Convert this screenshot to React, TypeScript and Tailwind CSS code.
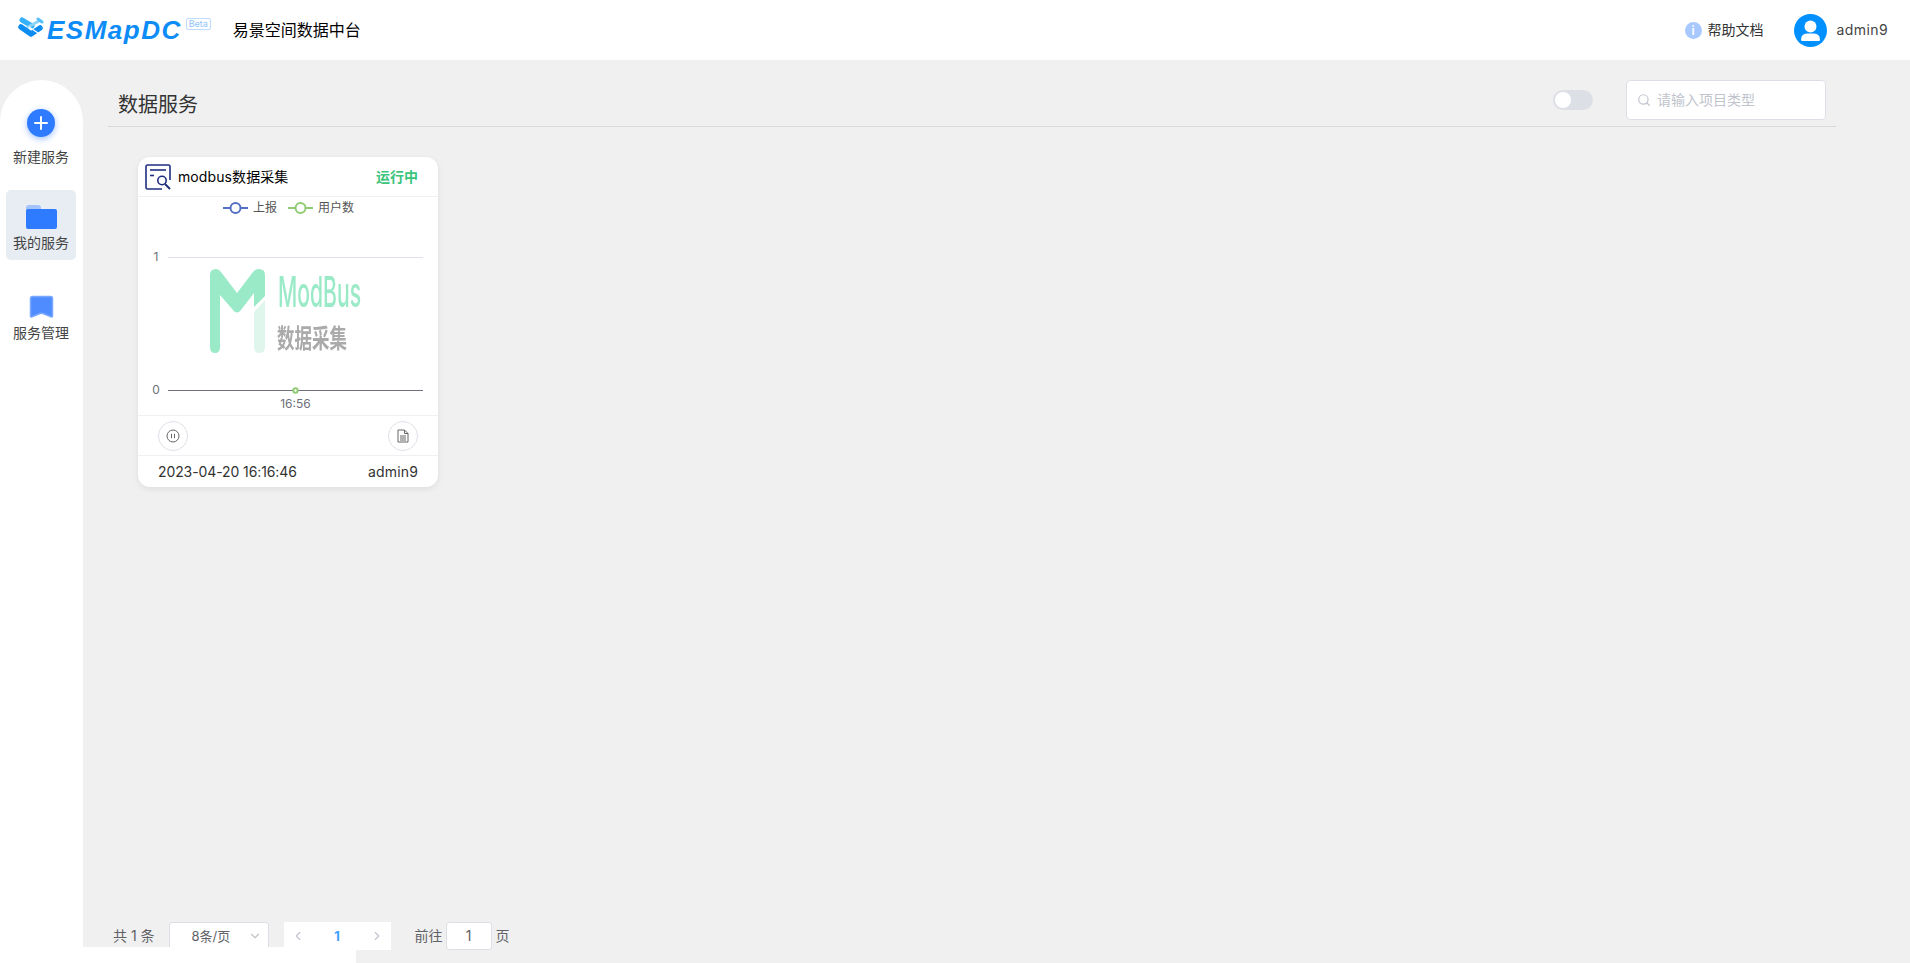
import React from 'react';
import { ChevronDown, ChevronLeft, ChevronRight, Search } from 'lucide-react';

const LogoMark = () => (
  <svg width="26" height="22" viewBox="0 0 26 22" fill="none" strokeLinecap="round" className="shrink-0 mb-[4px]">
    <path d="M4 3 L14 9" stroke="#35b0fb" strokeWidth="5" />
    <path d="M10 10 L21 4" stroke="#8ad4fc" strokeWidth="3" />
    <path d="M20 2 L24 5" stroke="#55c0fb" strokeWidth="3" />
    <path d="M3 10 L13 17 L22 11" stroke="#0c8df2" strokeWidth="5.5" strokeLinejoin="round" />
    <path d="M11 10 L20 16" stroke="#fff" strokeWidth="1.2" />
  </svg>
);

const CardIcon = () => (
  <svg width="26" height="26" viewBox="0 0 26 26" fill="none" stroke="#1f2f80" strokeWidth="1.6" className="shrink-0">
    <path d="M17 25 H2.5 Q1 25 1 23.5 V2.5 Q1 1 2.5 1 H23.5 Q25 1 25 2.5 V16" />
    <path d="M5 6 H21" />
    <path d="M5 11.5 H9" />
    <circle cx="17" cy="16.5" r="4.2" />
    <path d="M20 20 L25 25" strokeWidth="2" />
  </svg>
);

const LegendMark = ({ color }: { color: string }) => (
  <svg width="25" height="12" viewBox="0 0 25 12" fill="none" stroke={color} strokeWidth="2">
    <path d="M0 6 H7 M18 6 H25" />
    <circle cx="12.5" cy="6" r="5" fill="#fff" />
  </svg>
);

const Chart = () => (
  <svg width="300" height="196" viewBox="0 22 300 196" className="block">
    <text x="18" y="64" textAnchor="middle" fontSize="12" fill="#6e7079">1</text>
    <path d="M30 60.5 H285" stroke="#e0e2ec" />
    <g className="blur-[0.4px]">
      <path
        d="M72 78 Q72 72 78 72 Q81 72 83 75 L99 96 L115 75 Q117 72 121 72 Q127 72 127 78 L127 99 L116 110 V96 L103 113 Q99 118 95 113 L82 98 V150 Q82 156 77 156 Q72 156 72 150 Z"
        fill="#9aeac8"
      />
      <path d="M116 115 L127 103 V150 Q127 156 121 156 Q116 156 116 150 Z" fill="#def6ec" />
      <text x="140" y="110" fontSize="42" fontWeight="500" fill="#9aeac8" textLength="83" lengthAdjust="spacingAndGlyphs">ModBus</text>
      <text x="139" y="151" fontSize="26" fontWeight="700" fill="#aaaaaa" textLength="70" lengthAdjust="spacingAndGlyphs">数据采集</text>
    </g>
    <text x="18" y="197" textAnchor="middle" fontSize="12" fill="#6e7079">0</text>
    <path d="M30 193.5 H285" stroke="#6e7079" />
    <circle cx="157.5" cy="193.5" r="2.2" fill="#fff" stroke="#91cc75" strokeWidth="2" />
  </svg>
);

const NavItem = ({ icon, label, active }: { icon: React.ReactNode; label: string; active?: boolean }) => (
  <div className={`w-[70px] h-[70px] rounded-[5px] flex flex-col items-center ${active ? 'bg-[#e8ecf3]' : ''}`}>
    <div className="h-[44px] w-full flex items-end justify-center pb-[5px]">{icon}</div>
    <span className="text-sm leading-[18px] text-[#444] whitespace-nowrap">{label}</span>
  </div>
);

export default function App() {
  return (
    <div className="h-[963px] w-[1910px] overflow-hidden flex flex-col bg-[#f0f0f0] font-['Inter','Noto_Sans_CJK_SC',sans-serif]">
      {/* top bar */}
      <header className="h-[60px] bg-white flex items-center shrink-0 pl-[18px] pr-[22px]">
        <LogoMark />
        <span className="ml-[3px] text-[26px] leading-none font-bold italic text-[#0d8cf8] font-['Liberation_Sans',sans-serif] tracking-[1.5px]">ESMapDC</span>
        <span className="ml-[4px] mb-[12px] h-[12px] w-[25px] border border-[#bcdcff] rounded-[2px] text-[9px] leading-[10px] text-center text-[#8fc4fb]">Beta</span>
        <span className="ml-[22px] text-base text-black">易景空间数据中台</span>
        <div className="ml-auto flex items-center">
          <div className="w-[17px] h-[17px] rounded-full bg-[#a8c9ff] text-white text-xs leading-[17px] text-center font-semibold">i</div>
          <span className="ml-[6px] text-sm text-[#333]">帮助文档</span>
          <div className="ml-[30px] w-[33px] h-[33px] rounded-full bg-[#0090ff] overflow-hidden">
            <svg viewBox="0 0 33 33" width="33" height="33" fill="#fff">
              <circle cx="16.5" cy="12.5" r="6" />
              <path d="M7 26 Q7 19.5 13 19.5 H20 Q26 19.5 26 26 Q26 27 24.5 27 H8.5 Q7 27 7 26 Z" />
            </svg>
          </div>
          <span className="ml-[10px] text-sm text-[#444] tracking-[0.4px]">admin9</span>
        </div>
      </header>

      <div className="flex-1 flex min-h-0">
        {/* side nav */}
        <aside className="w-[83px] mt-[20px] pr-[1px] bg-white rounded-t-[42px] flex flex-col items-center shrink-0">
          <div className="pt-[29px] flex flex-col items-center">
            <div className="w-[28px] h-[28px] rounded-full bg-[#2f7bff] shadow-[0_2px_6px_rgba(47,123,255,0.45)] flex items-center justify-center">
              <svg width="14" height="14" viewBox="0 0 14 14" stroke="#fff" strokeWidth="2" strokeLinecap="round">
                <path d="M7 1 V13 M1 7 H13" />
              </svg>
            </div>
            <span className="mt-[11px] text-sm leading-[18px] text-[#444]">新建服务</span>
          </div>
          <div className="mt-[24px]">
            <NavItem
              active
              label="我的服务"
              icon={
                <svg width="31" height="24" viewBox="0 0 31 24">
                  <path d="M0 3 Q0 0 3 0 H12 Q15 0 15 3 V8 H0 Z" fill="#a5c3fb" />
                  <rect x="0" y="4" width="31" height="20" rx="2" fill="#2f7bff" />
                </svg>
              }
            />
          </div>
          <div className="mt-[20px]">
            <NavItem
              label="服务管理"
              icon={
                <svg width="25" height="24" viewBox="0 0 25 24">
                  <path d="M1.5 3.5 Q1.5 1.5 3.5 1.5 H21.5 Q23.5 1.5 23.5 3.5 V21 Q23.5 22.5 22 21.8 L14 18.5 Q12.5 18 11 18.5 L3 21.8 Q1.5 22.5 1.5 21 Z" fill="#4f8cff" stroke="#7aa7ff" strokeWidth="1.5" />
                </svg>
              }
            />
          </div>
        </aside>

        <main className="flex-1 flex flex-col relative min-w-0">
          <div className="ml-[25px] w-[1728px] h-[67px] pt-[13px] border-b border-[#d9d9dc] shrink-0 flex items-center">
            <h2 className="ml-[10px] mt-[10px] text-xl font-normal text-[#333]">数据服务</h2>
            <div className="ml-auto mr-[10px] flex items-center gap-[33px]">
              <div className="w-[40px] h-[20px] rounded-full bg-[#dcdfe6] p-[2px]">
                <div className="w-[16px] h-[16px] rounded-full bg-white" />
              </div>
              <div className="w-[200px] h-[40px] bg-white border border-[#dcdfe6] rounded-[4px] flex items-center pl-[10px]">
                <Search size={14} className="text-[#c0c4cc]" />
                <input
                  placeholder="请输入项目类型"
                  className="ml-[6px] w-[160px] text-sm outline-none placeholder:text-[#c0c4cc]"
                />
              </div>
            </div>
          </div>

          {/* service card */}
          <div className="ml-[55px] mt-[30px] w-[300px] h-[330px] bg-white rounded-[12px] shadow-[0_2px_6px_rgba(0,0,0,0.08)] flex flex-col shrink-0">
            <div className="h-[40px] border-b border-[#f0f0f4] flex items-center pl-[7px] pr-[20px]">
              <CardIcon />
              <span className="ml-[7px] text-sm text-black tracking-[0.1px]">modbus数据采集</span>
              <span className="ml-auto text-sm font-bold text-[#3cc47c]">运行中</span>
            </div>
            <div className="h-[218px] relative">
              <div className="h-[22px] flex items-center justify-center text-xs text-[#555] pl-[1px]">
                <LegendMark color="#5470c6" />
                <span className="ml-[5px]">上报</span>
                <span className="ml-[11px]"><LegendMark color="#91cc75" /></span>
                <span className="ml-[5px]">用户数</span>
              </div>
              <Chart />
              <span className="absolute left-0 w-[315px] top-[199px] text-center text-xs leading-[16px] text-[#6e7079]">16:56</span>
            </div>
            <div className="h-[41px] border-y border-[#f0f0f4] flex items-center justify-between px-[20px]">
              <div className="w-[30px] h-[30px] rounded-full border border-[#e0e0ea] flex items-center justify-center">
                <svg width="14" height="14" viewBox="0 0 14 14" fill="none" stroke="#666">
                  <circle cx="7" cy="7" r="6" />
                  <path d="M5.5 4.8 V9.2 M8.5 4.8 V9.2" />
                </svg>
              </div>
              <div className="w-[30px] h-[30px] rounded-full border border-[#e0e0ea] flex items-center justify-center">
                <svg width="12" height="14" viewBox="0 0 12 14" fill="none" stroke="#666">
                  <path d="M1 1 H7.5 L11 4.5 V13 H1 Z M7.5 1 V4.5 H11" />
                  <path d="M3 7 H9 M3 9 H9 M3 11 H9" />
                </svg>
              </div>
            </div>
            <div className="flex-1 flex items-center justify-between px-[20px] text-sm text-[#333]">
              <span className="tracking-[-0.1px]">2023-04-20 16:16:46</span>
              <span className="tracking-[0.15px]">admin9</span>
            </div>
          </div>

          {/* pagination */}
          <div className="mt-auto h-[28px] mb-[13px] flex items-center text-sm text-[#606266] pl-[30px]">
            <span>共 1 条</span>
            <div className="ml-[14px] w-[100px] h-[28px] bg-white border border-[#dcdfe6] rounded-[3px] flex items-center pl-[22px] pr-[6px]">
              <span className="text-[13px]">8条/页</span>
              <ChevronDown size={14} className="ml-auto text-[#c0c4cc]" />
            </div>
            <div className="ml-[15px] w-[107px] h-[28px] bg-white flex items-center justify-between px-[7px]">
              <ChevronLeft size={14} className="text-[#c0c4cc]" />
              <span className="text-[13px] font-bold text-[#409eff]">1</span>
              <ChevronRight size={14} className="text-[#c0c4cc]" />
            </div>
            <span className="ml-[24px]">前往</span>
            <div className="ml-[3px] w-[46px] h-[28px] bg-white border border-[#dcdfe6] rounded-[3px] text-center leading-[26px]">1</div>
            <span className="ml-[4px]">页</span>
          </div>
          <div className="absolute left-0 bottom-0 w-[273px] h-[16px] bg-white" />
        </main>
      </div>
    </div>
  );
}
